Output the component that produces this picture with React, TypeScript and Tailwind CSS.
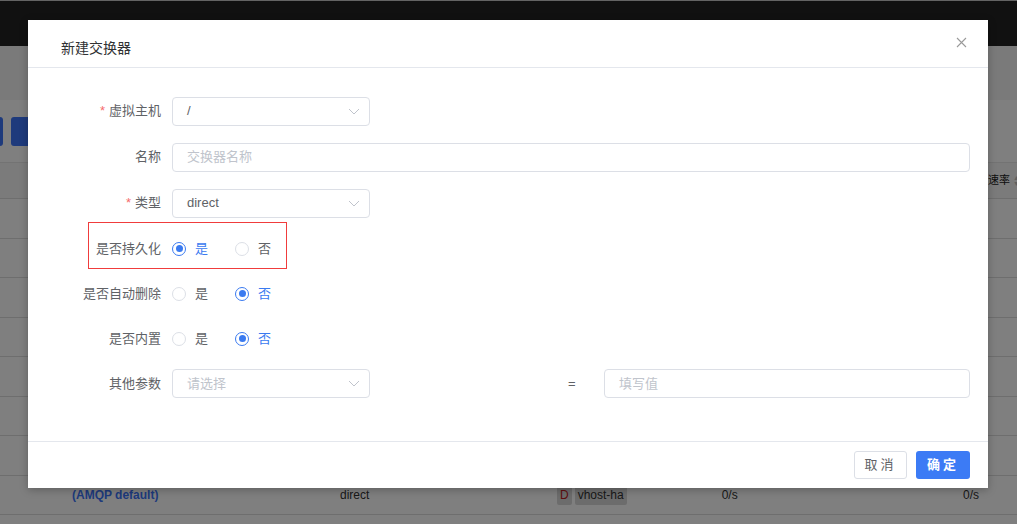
import React, { useState } from 'react';

const font = { fontFamily: '"Liberation Sans", "Noto Sans CJK SC", sans-serif' };

function Chevron() {
  return (
    <svg width="12" height="7" viewBox="0 0 12 7" fill="none" className="shrink-0">
      <path d="M1 1l5 5 5-5" stroke="#c0c4cc" strokeWidth="1" />
    </svg>
  );
}

function Select({ value, placeholder }: { value?: string; placeholder?: string }) {
  return (
    <div className="flex h-[29px] w-[198px] items-center justify-between rounded-[4px] border border-[#dcdfe6] bg-white pl-[14px] pr-[9px] text-[13px]">
      {value ? (
        <span className="text-[#606266]">{value}</span>
      ) : (
        <span className="text-[#c0c4cc]">{placeholder}</span>
      )}
      <Chevron />
    </div>
  );
}

function TextInput({ placeholder, className }: { placeholder: string; className?: string }) {
  return (
    <div
      className={
        'flex h-[29px] items-center rounded-[4px] border border-[#dcdfe6] bg-white px-[14px] text-[13px] text-[#c0c4cc] ' +
        (className || '')
      }
    >
      {placeholder}
    </div>
  );
}

function Radio({ checked, label, onClick }: { checked: boolean; label: string; onClick: () => void }) {
  return (
    <div className="flex w-[63px] cursor-pointer items-center" onClick={onClick}>
      <span
        className={
          checked
            ? 'flex h-[14px] w-[14px] items-center justify-center rounded-full border border-[#3a7af0] bg-white'
            : 'flex h-[14px] w-[14px] items-center justify-center rounded-full border border-[#dcdfe6] bg-white'
        }
      >
        {checked && <span className="h-[7px] w-[7px] rounded-full bg-[#3a7af0]" />}
      </span>
      <span className={checked ? 'ml-[9px] text-[13px] text-[#3a7af0]' : 'ml-[9px] text-[13px] text-[#606266]'}>
        {label}
      </span>
    </div>
  );
}

function Row({
  label,
  required,
  children,
  height = 'h-[46px]',
}: {
  label: string;
  required?: boolean;
  children: React.ReactNode;
  height?: string;
}) {
  return (
    <div className={'relative flex items-center ' + height}>
      <div className="flex w-[133px] shrink-0 justify-end text-[13px] text-[#606266]">
        {required && <span className="mr-[4px] text-[#f56c6c]">*</span>}
        {label}
      </div>
      <div className="ml-[11px] flex flex-1 items-center">{children}</div>
    </div>
  );
}

function BackgroundPage() {
  const rows = [0, 1, 2, 3, 4, 5, 6];
  return (
    <div className="flex h-full flex-col bg-white">
      <div className="h-px bg-[#c8c8c8]" />
      <div className="h-[45px] bg-[#222222]" />
      <div className="h-[54px] bg-[#f4f4f4]" />
      <div className="flex h-[62px] items-start pt-[17px]">
        <div className="h-[29px] w-[3px] rounded-r-[3px] bg-[#3d75f8]" />
        <div className="ml-[8px] h-[29px] w-[40px] rounded-[3px] bg-[#3d75f8]" />
      </div>
      <div className="flex h-[36px] items-center whitespace-nowrap border-t border-[#e6e6e6] bg-[#f6f6f6] pl-[988px] text-[11px] text-[#222]">
        <span>速率</span>
        <span className="ml-[3px] flex flex-col text-[7px] leading-[6px] text-[#c0c0c0]">
          <span>▲</span>
          <span>▼</span>
        </span>
      </div>
      {rows.map((r) => (
        <div key={r} className="h-[39.5px] border-t border-[#dddddd]" />
      ))}
      <div className="flex h-[40px] items-center border-y border-[#dddddd] text-[12px] text-[#333]">
        <span className="ml-[72px] w-[268px] font-bold text-[#3d75f8]">(AMQP default)</span>
        <span className="w-[217px]">direct</span>
        <span className="flex h-[21px] items-center rounded-[2px] bg-[#d8d8d8] px-[3px] text-[#c02020]">D</span>
        <span className="ml-[3px] flex h-[21px] w-[52px] items-center rounded-[2px] bg-[#d8d8d8] pl-[3px] text-[#333]">
          vhost-ha
        </span>
        <span className="ml-[95px] w-[100px]">0/s</span>
        <span className="ml-auto mr-[38px]">0/s</span>
      </div>
    </div>
  );
}

export default function App() {
  const [durable, setDurable] = useState(true);
  const [autoDelete, setAutoDelete] = useState(false);
  const [internal, setInternal] = useState(false);

  return (
    <div className="relative h-[524px] w-[1017px] overflow-hidden" style={font}>
      <BackgroundPage />
      <div className="absolute inset-0 bg-black/50" />

      {/* 新建交换器 弹窗 */}
      <div className="absolute left-[28px] top-[20px] flex w-[960px] flex-col bg-white shadow-[0_2px_8px_rgba(0,0,0,0.25)]">
        <div className="flex h-[48px] items-center justify-between border-b border-[#e4e7ed] pl-[33px] pr-[20px]">
          <span className="pt-[9px] text-[14px] text-[#303133]">新建交换器</span>
          <svg width="11" height="11" viewBox="0 0 11 11" className="mb-[2px] mr-[1px]">
            <path d="M1 1l9 9M10 1l-9 9" stroke="#9a9a9a" strokeWidth="1.1" />
          </svg>
        </div>

        <div className="flex flex-col pb-[35px] pt-[20px]">
          <Row label="虚拟主机" required>
            <Select value="/" />
          </Row>
          <Row label="名称">
            <TextInput placeholder="交换器名称" className="w-[798px]" />
          </Row>
          <Row label="类型" required>
            <Select value="direct" />
          </Row>
          <Row label="是否持久化" height="h-[45px]">
            <Radio checked={durable} label="是" onClick={() => setDurable(true)} />
            <Radio checked={!durable} label="否" onClick={() => setDurable(false)} />
            <div className="pointer-events-none absolute left-[60px] top-[-4px] h-[47px] w-[199px] border border-[#f03c3c]" />
          </Row>
          <Row label="是否自动删除" height="h-[45px]">
            <Radio checked={autoDelete} label="是" onClick={() => setAutoDelete(true)} />
            <Radio checked={!autoDelete} label="否" onClick={() => setAutoDelete(false)} />
          </Row>
          <Row label="是否内置" height="h-[45px]">
            <Radio checked={internal} label="是" onClick={() => setInternal(true)} />
            <Radio checked={!internal} label="否" onClick={() => setInternal(false)} />
          </Row>
          <Row label="其他参数" height="h-[45px]">
            <Select placeholder="请选择" />
            <span className="ml-[198px] w-[36px] text-[13px] text-[#606266]">=</span>
            <TextInput placeholder="填写值" className="w-[366px]" />
          </Row>
        </div>

        <div className="flex h-[47px] items-start justify-end gap-[9px] border-t border-[#e4e7ed] pr-[18px] pt-[9px]">
          <button className="flex h-[28px] w-[53px] items-center justify-center rounded-[3px] border border-[#dcdfe6] bg-white text-[13px] tracking-[3px] text-[#606266]">
            取消
          </button>
          <button className="flex h-[28px] w-[54px] items-center justify-center rounded-[3px] bg-[#3c7bf5] text-[13px] font-bold tracking-[3px] text-white">
            确定
          </button>
        </div>
      </div>
    </div>
  );
}
